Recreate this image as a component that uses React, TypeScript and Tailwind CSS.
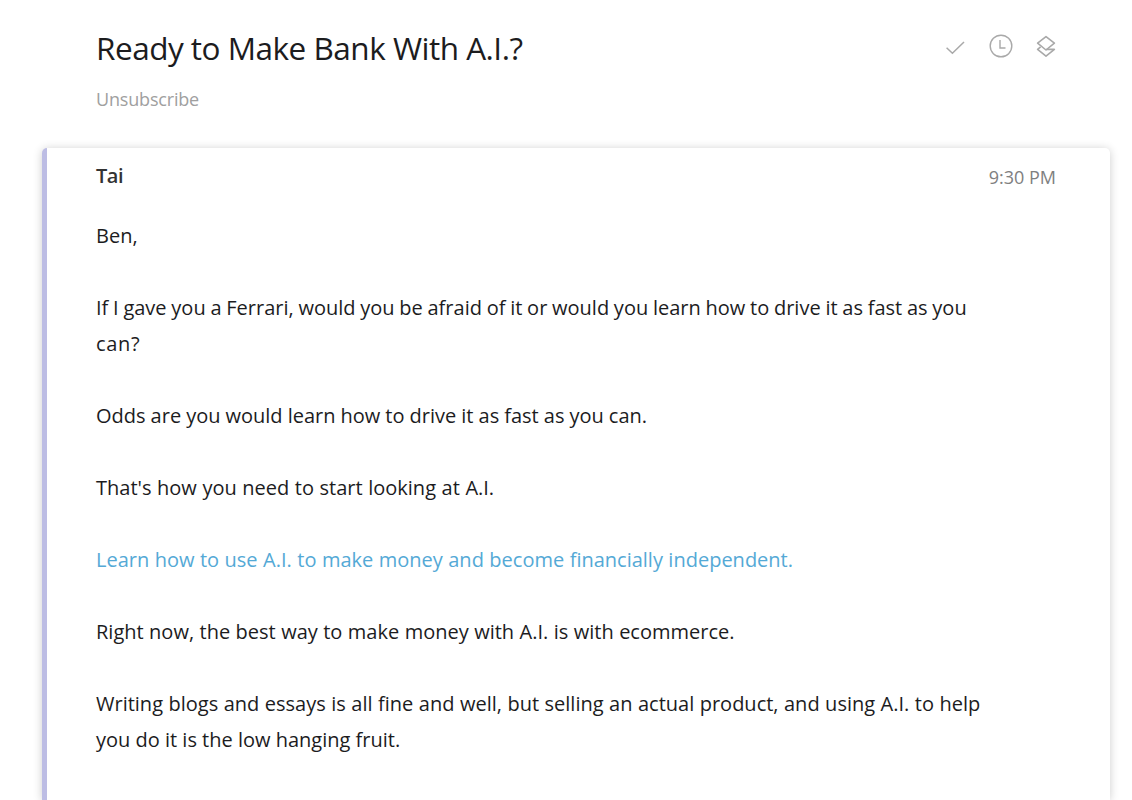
import React from "react";

type Line = { text: string; style: string };

const lines: Line[] = [
  { text: "Ben,", style: "" },
  { text: "If I gave you a Ferrari, would you be afraid of it or would you learn how to drive it as fast as you", style: "mt-9 [word-spacing:-0.45px]" },
  { text: "can?", style: "tracking-[0.7px]" },
  { text: "Odds are you would learn how to drive it as fast as you can.", style: "mt-9 [word-spacing:-0.15px]" },
  { text: "That's how you need to start looking at A.I.", style: "mt-9 [word-spacing:0.38px]" },
  { text: "Learn how to use A.I. to make money and become financially independent.", style: "mt-9 text-[#54a9d6] [word-spacing:0.27px]" },
  { text: "Right now, the best way to make money with A.I. is with ecommerce.", style: "mt-9 [word-spacing:0.25px]" },
  { text: "Writing blogs and essays is all fine and well, but selling an actual product, and using A.I. to help", style: "mt-9 [word-spacing:0.3px]" },
  { text: "you do it is the low hanging fruit.", style: "" },
];

function Actions() {
  return (
    <div className="flex h-6 items-center gap-[21px] text-[#a9a9a9]">
      <svg className="size-6" viewBox="0 0 24 24" fill="none" stroke="currentColor" strokeWidth="1.5">
        <path d="M2.6 13.8 8.4 19.3 20 8" />
      </svg>
      <svg className="size-6" viewBox="0 0 24 24" fill="none" stroke="currentColor" strokeWidth="1.4">
        <circle cx="12" cy="12" r="10.8" />
        <path d="M11 6v8h5.5" />
      </svg>
      <svg className="size-6" viewBox="0 0 24 24" fill="none" stroke="currentColor" strokeWidth="1.6" strokeLinejoin="round">
        <path d="M12 2.6 20.4 9.2 12 16 3.6 9.2Z" />
        <path d="M6.6 12.8 3.6 15.4 12 22.2 20.4 15.4H12.5" />
      </svg>
    </div>
  );
}

export default function App() {
  return (
    <div className="flex h-[800px] w-[1132px] flex-col overflow-hidden bg-white font-['Open_Sans',sans-serif] text-[#1c1c1e]">
      <header className="h-[148px] shrink-0 pl-24 pr-[74px] pt-[26px]">
        <div className="flex items-center justify-between">
          <h1 className="whitespace-nowrap text-[31.5px] leading-[43px] tracking-[-0.5px]">Ready to Make Bank With A.I.?</h1>
          <div className="-mt-1"><Actions /></div>
        </div>
        <p className="mt-[18px] text-[18px] leading-6 tracking-[-0.18px] text-[#a0a0a0]">Unsubscribe</p>
      </header>
      <main className="ml-[42px] mr-[22px] flex-1 rounded-t-[5px] border-l-[5px] border-[#bdbde4] bg-white pl-[49px] pr-[54px] shadow-[0_1px_10px_rgba(0,0,0,0.2)]">
        <div className="flex h-[70px] justify-between pt-4 leading-6">
          <span className="text-[20px] font-semibold tracking-[-0.5px] text-[#333]">Tai</span>
          <span className="pt-px text-[18px] text-[#808080]">9:30 PM</span>
        </div>
        {lines.map((l) => (
          <p key={l.text} className={`whitespace-nowrap text-[20px] leading-9 ${l.style}`}>{l.text}</p>
        ))}
      </main>
    </div>
  );
}
